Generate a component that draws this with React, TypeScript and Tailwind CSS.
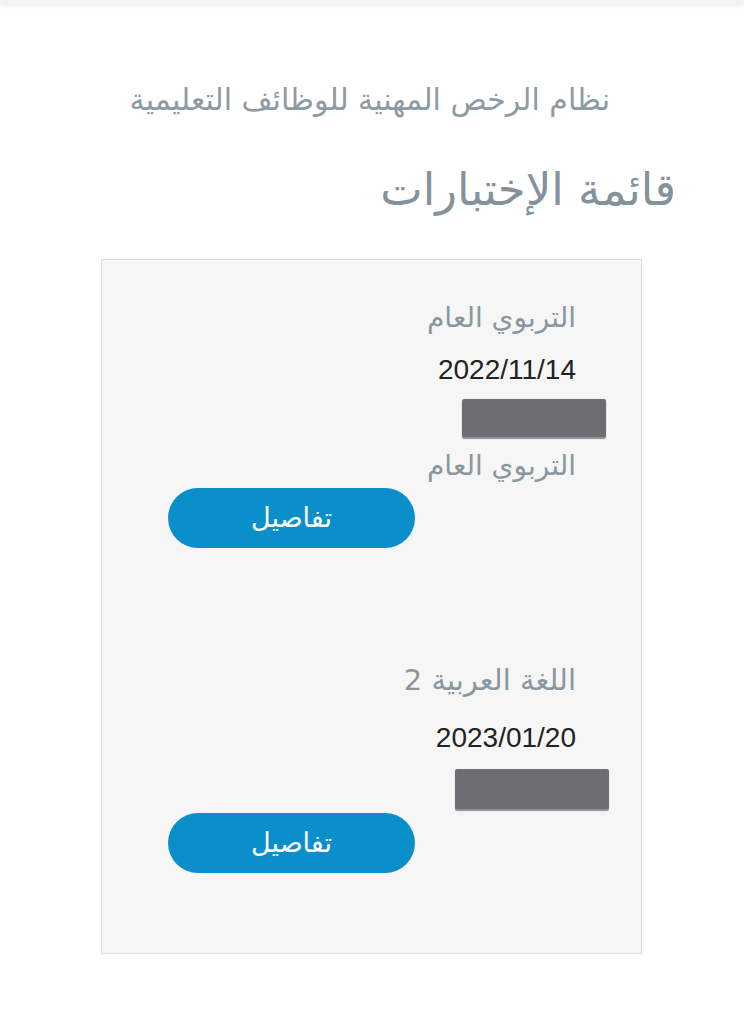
export default function App() {
  const font = { fontFamily: '"DejaVu Sans", "Noto Sans", sans-serif' };
  const latin = { fontFamily: '"Liberation Sans", Arial, sans-serif' };
  return (
    <div dir="rtl" className="min-h-[1024px] w-[744px] bg-white" style={font}>
      {/* top bar shadow */}
      <div className="h-[4px] w-full bg-[#f4f4f4] shadow-[0_2px_4px_rgba(0,0,0,0.08)]"></div>

      <div className="pr-[134px] pt-[76px]">
        <p className="text-[30px] leading-[40px] text-[#8c9aa2]">نظام الرخص المهنية للوظائف التعليمية</p>
      </div>

      <div className="pr-[68px] pt-[42px]">
        <h1 className="text-[45px] leading-[56px] text-[#84939b]">قائمة الإختبارات</h1>
      </div>

      <div className="mr-[102px] mt-[41px] h-[695px] w-[541px] border border-[#dcdcdc] bg-[#f6f6f6] pr-[65px] pl-[66px] pt-[38px]">
        {/* item 1 */}
        <div className="flex flex-col">
          <p className="text-[28px] leading-[40px] text-[#8a979e]">التربوي العام</p>
          <p dir="ltr" className="mt-[18px] text-right text-[28px] leading-[28px] text-[#222]" style={latin}>2022/11/14</p>
          <div className="mt-[15px] ml-auto mr-[-30px] h-[38px] w-[144px] rounded-[2px] bg-[#6d6e72] shadow-[0_2px_1px_rgba(40,40,60,0.5)]"></div>
          <p className="mt-[9px] text-[28px] leading-[40px] text-[#8a979e]">التربوي العام</p>
          <button className="mr-auto mt-[2px] h-[60px] w-[247px] rounded-full bg-[#0a8fcb] text-[27px] text-white">تفاصيل</button>
        </div>

        {/* item 2 */}
        <div className="mt-[112px] flex flex-col">
          <p className="text-[29px] leading-[40px] text-[#8a979e]">اللغة العربية 2</p>
          <p dir="ltr" className="mt-[24px] text-right text-[28px] leading-[28px] text-[#222]" style={latin}>2023/01/20</p>
          <div className="mt-[17px] ml-auto mr-[-33px] h-[40px] w-[154px] rounded-[2px] bg-[#6d6e72] shadow-[0_2px_1px_rgba(40,40,60,0.5)]"></div>
          <button className="mr-auto mt-[4px] h-[60px] w-[247px] rounded-full bg-[#0a8fcb] text-[27px] text-white">تفاصيل</button>
        </div>
      </div>
    </div>
  );
}
